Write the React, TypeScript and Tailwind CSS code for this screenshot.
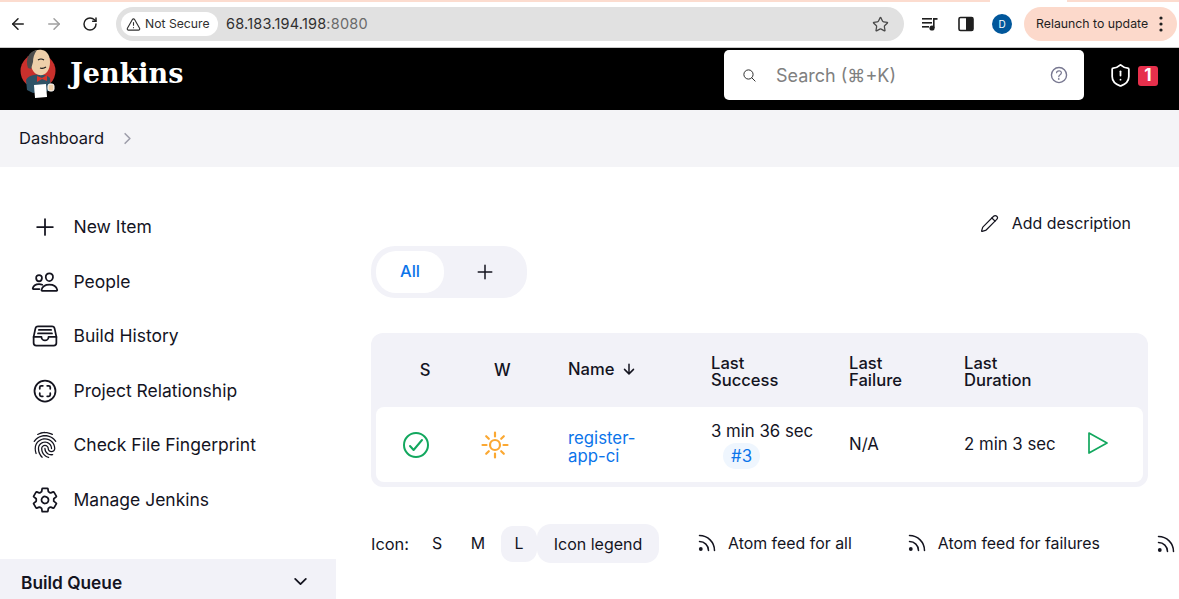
import { ArrowLeft, ArrowRight, RotateCw, TriangleAlert, Star, ShieldAlert, Pencil } from 'lucide-react';
import {
  IoAddOutline,
  IoPeopleOutline,
  IoFileTrayFullOutline,
  IoScanCircleOutline,
  IoFingerPrintOutline,
  IoSettingsOutline,
  IoSearchOutline,
  IoHelpCircleOutline,
  IoArrowDownOutline,
  IoChevronDown,
  IoChevronForward,
  IoCheckmarkCircleOutline,
} from 'react-icons/io5';

const sidebarItems = [
  { label: 'New Item', icon: <IoAddOutline size={28} /> },
  { label: 'People', icon: <IoPeopleOutline size={28} /> },
  { label: 'Build History', icon: <IoFileTrayFullOutline size={28} /> },
  { label: 'Project Relationship', icon: <IoScanCircleOutline size={28} /> },
  { label: 'Check File Fingerprint', icon: <IoFingerPrintOutline size={28} /> },
  { label: 'Manage Jenkins', icon: <IoSettingsOutline size={28} /> },
];

function JenkinsLogo() {
  return (
    <svg width="38" height="50" viewBox="0 0 38 50">
      <circle cx="18" cy="22" r="17.5" fill="#c9302c" />
      <path d="M6 31 C9 24 26 24 30 29 L31 40 L29 42 L13 44 L7 41 Z" fill="#2f5266" />
      <path d="M10 9 C10 3 16 0 22 1 C28 2 30 8 30 13 C30 22 25 27 19 26 C13 25 10 18 10 9 Z" fill="#eecfa9" />
      <path d="M8 19 C5 10 9 2 17 1 C14 5 13 9 13 13 L11 20 Z" fill="#4d4d4d" />
      <path d="M18 11 q3 -2 6 0 M20 19 q3 1 6 -1" stroke="#1a1a1a" strokeWidth="1.2" fill="none" />
      <path d="M17 27 L22 29 L27 26 L27 32 L22 30 L17 33 Z" fill="#d9342b" />
      <path d="M14 36 L26 35 L27 48 L15 49 Z" fill="#ffffff" />
      <rect x="28" y="35" width="6" height="7" rx="2" fill="#eecfa9" stroke="#ffffff" />
    </svg>
  );
}

function RssIcon() {
  return (
    <svg className="shrink-0" width="18" height="18" viewBox="0 0 18 18" fill="none" stroke="#14141f" strokeWidth="1.5" strokeLinecap="round">
      <circle cx="2.8" cy="15" r="1.9" fill="#14141f" stroke="none" />
      <path d="M1.5 7.5 A9 9 0 0 1 10.5 16.5" />
      <path d="M1.5 1.5 A15 15 0 0 1 16.5 16.5" />
    </svg>
  );
}

function SunIcon() {
  return (
    <svg width="28" height="28" viewBox="0 0 28 28" fill="none" stroke="#fba832" strokeWidth="2.2" strokeLinecap="round">
      <circle cx="14" cy="14" r="5" />
      <path d="M14 1.5 V5.5 M14 22.5 V26.5 M1.5 14 H5.5 M22.5 14 H26.5 M5.2 5.2 L7.8 7.8 M20.2 20.2 L22.8 22.8 M5.2 22.8 L7.8 20.2 M20.2 7.8 L22.8 5.2" />
    </svg>
  );
}

function ChromeBar() {
  return (
    <div className="h-[48px] bg-white flex flex-col border-b border-[#c9c9c9]">
      <div className="h-[2px] flex shrink-0">
        <div className="w-[990px] bg-[#fcdccf]" />
        <div className="w-[77px]" />
        <div className="flex-1 bg-[#fcdccf]" />
      </div>
      <div className="flex-1 flex items-center pb-[3px] pt-[2px] pl-[9px] pr-[2px] text-[#1f1f1f]">
        <ArrowLeft size={18} strokeWidth={2} />
        <ArrowRight size={18} strokeWidth={2} className="ml-[18px] text-[#a0a0a0]" />
        <RotateCw size={16} strokeWidth={2.2} className="ml-[19px]" />
        <div className="ml-[18px] w-[788px] h-[34px] rounded-full bg-[#e1e1e1] flex items-center pl-[5px] pr-[15px]">
          <div className="h-[24px] w-[97px] rounded-full bg-white flex items-center pl-[5px] gap-[4px] text-[12.2px] text-[#303030]">
            <TriangleAlert size={15} strokeWidth={1.8} />
            Not Secure
          </div>
          <div className="ml-[8px] text-[14.5px] text-[#303030] tracking-[0.2px]">
            68.183.194.198<span className="text-[#6a6a6a]">:8080</span>
          </div>
          <Star size={17} strokeWidth={1.8} className="ml-auto text-[#4a4a4a]" />
        </div>
        <svg className="ml-[18px]" width="16" height="16" viewBox="0 0 16 16" fill="#1f1f1f">
          <rect x="0" y="2" width="10" height="1.6" />
          <rect x="0" y="6" width="10" height="1.6" />
          <rect x="0" y="10" width="7" height="1.6" />
          <rect x="11" y="2" width="4.5" height="1.8" />
          <rect x="11" y="2" width="1.6" height="10" />
          <circle cx="10" cy="12" r="2.6" />
        </svg>
        <svg className="ml-[20px]" width="16" height="16" viewBox="0 0 16 16">
          <rect x="1" y="1.5" width="14" height="13" rx="1.5" fill="#ffffff" stroke="#1f1f1f" strokeWidth="1.6" />
          <rect x="8" y="1.5" width="7" height="13" fill="#1f1f1f" />
        </svg>
        <div className="ml-[18px] w-[20px] h-[20px] rounded-full bg-[#01579b] text-white text-[10px] flex items-center justify-center">
          D
        </div>
        <div className="ml-[12px] w-[153px] h-[34px] rounded-full bg-[#fcd9cb] flex items-center pl-[12px] text-[12.3px] text-[#1f1f1f]">
          Relaunch to update
          <svg className="ml-[11px]" width="4" height="16" viewBox="0 0 4 16" fill="#1f1f1f">
            <circle cx="2" cy="2" r="1.6" />
            <circle cx="2" cy="8" r="1.6" />
            <circle cx="2" cy="14" r="1.6" />
          </svg>
        </div>
      </div>
    </div>
  );
}

function JenkinsHeader() {
  return (
    <div className="h-[62px] bg-black flex items-center relative pl-[20px]">
      <div className="mb-[10px] flex">
        <JenkinsLogo />
      </div>
      <span className="ml-[12px] mb-[10px] text-white text-[27px] font-bold font-['DejaVu_Serif',serif]">
        Jenkins
      </span>
      <div className="ml-auto mr-[95px] mb-[8px] w-[360px] h-[50px] rounded-[5px] bg-white flex items-center pl-[18px] pr-[15px]">
        <IoSearchOutline size={15} className="text-[#222]" />
        <span className="ml-[19px] text-[18px] text-[#808080]">Search (⌘+K)</span>
        <IoHelpCircleOutline size={22} className="ml-auto mr-[-1px] text-[#777790]" />
      </div>
      <div className="absolute left-[1108px] top-[15px] flex items-center gap-[5px]">
        <ShieldAlert size={25} strokeWidth={1.7} className="text-white" />
        <div className="w-[20px] h-[20px] rounded-[3px] bg-[#e6304c] text-white text-[17px] font-bold flex items-center justify-center">
          1
        </div>
      </div>
    </div>
  );
}

function Sidebar() {
  return (
    <div className="w-[336px] shrink-0 flex flex-col">
      <div className="pt-[33px] flex flex-col">
        {sidebarItems.map((item) => (
          <div key={item.label} className="h-[54.5px] flex items-center pl-[31px] text-[#14141f]">
            <span className="w-[28px] flex justify-center">{item.icon}</span>
            <span className="ml-[14.5px] text-[17.5px]">{item.label}</span>
          </div>
        ))}
      </div>
      <div className="mt-[32px] h-[60px] bg-[#f2f2f8] flex items-start pt-[11px] pl-[21px] pr-[26px]">
        <span className="text-[17.3px] font-semibold text-[#14141f]">Build Queue</span>
        <IoChevronDown size={19} className="ml-auto mt-[2px] text-[#14141f]" />
      </div>
    </div>
  );
}

function JobTable() {
  const cols = 'grid grid-cols-[98px_94px_143px_138px_115px_123px_56px]';
  return (
    <div className="mt-[35px] w-[777px] h-[154px] rounded-[12px] bg-[#f2f2f8] p-[5px] pt-0 flex flex-col">
      <div className={`${cols} h-[74px] items-center text-[16.6px] font-medium text-[#14141f] leading-[17px]`}>
        <div className="text-center">S</div>
        <div className="pl-[20px]">W</div>
        <div className="flex items-center gap-[7px] pb-[2px]">
          Name
          <IoArrowDownOutline size={16} />
        </div>
        <div className="pt-[4px]">
          Last
          <br />
          Success
        </div>
        <div className="pt-[4px]">
          Last
          <br />
          Failure
        </div>
        <div className="pt-[4px]">
          Last
          <br />
          Duration
        </div>
        <div />
      </div>
      <div className={`${cols} h-[75px] rounded-[8px] bg-white items-center text-[16.8px] text-[#14141f]`}>
        <div className="pl-[24px]">
          <IoCheckmarkCircleOutline size={32} className="text-[#12a75e]" />
        </div>
        <div className="pl-[7px]">
          <SunIcon />
        </div>
        <div className="text-[#0b74ea] text-[16.8px] leading-[18px] pt-[4px]">
          register-
          <br />
          app-ci
        </div>
        <div className="leading-[20px]">
          3 min 36 sec
          <div className="mt-[2px] ml-[12px] w-[37px] h-[26px] rounded-full bg-[#eff6fe] text-[#0b74ea] flex items-center justify-center">
            #3
          </div>
        </div>
        <div>N/A</div>
        <div>2 min 3 sec</div>
        <div className="mb-[4px]">
          <svg width="22" height="24" viewBox="0 0 22 24" fill="none" stroke="#12a75e" strokeWidth="1.7" strokeLinejoin="round">
            <path d="M2 2 L20 12 L2 22 Z" />
          </svg>
        </div>
      </div>
    </div>
  );
}

function Footer() {
  return (
    <div className="mt-[37px] h-[39px] flex items-center text-[15.9px] text-[#14141f] whitespace-nowrap">
      <span className="shrink-0 w-[38px] text-[16.4px] pt-[1px]">Icon:</span>
      <span className="shrink-0 w-[36px] ml-[10px] text-center">S</span>
      <span className="shrink-0 w-[36px] ml-[5px] text-center">M</span>
      <span className="shrink-0 w-[36px] h-[36px] ml-[5px] rounded-[12px] bg-[#f2f2f8] flex items-center justify-center">L</span>
      <span className="shrink-0 w-[122px] h-[39px] pt-[1px] rounded-[14px] bg-[#f2f2f8] flex items-center justify-center text-[16px]">
        Icon legend
      </span>
      <span className="shrink-0 ml-[39px] flex items-center gap-[12px]">
        <RssIcon />
        Atom feed for all
      </span>
      <span className="shrink-0 ml-[56px] flex items-center gap-[12px]">
        <RssIcon />
        Atom feed for failures
      </span>
      <span className="shrink-0 ml-[57px] flex items-center">
        <RssIcon />
      </span>
    </div>
  );
}

export default function App() {
  return (
    <div className="w-[1179px] h-[599px] overflow-hidden bg-white font-['Inter','Liberation_Sans',sans-serif]">
      <ChromeBar />
      <JenkinsHeader />
      <div className="h-[57px] bg-[#f4f4f7] flex items-center pl-[19px] text-[16.5px] text-[#14141f]">
        Dashboard
        <IoChevronForward size={17} className="ml-[15px] text-[#9d9daa]" />
      </div>
      <div className="flex">
        <Sidebar />
        <div className="pl-[35px] flex-1 min-w-0">
          <div className="flex justify-end pr-[48px] pt-[45px] h-[79px] items-start">
            <div className="flex items-center gap-[13px] text-[15.9px] text-[#14141f]">
              <Pencil size={19} strokeWidth={1.5} />
              Add description
            </div>
          </div>
          <div className="w-[156px] h-[52px] rounded-[24px] bg-[#f2f2f8] p-[5px] flex items-center">
            <div className="w-[68px] h-[42px] pb-[2px] rounded-[20px] bg-white flex items-center justify-center text-[16.5px] font-medium text-[#0b74ea]">
              All
            </div>
            <IoAddOutline size={24} className="ml-[29px] text-[#14141f]" />
          </div>
          <JobTable />
          <Footer />
        </div>
      </div>
    </div>
  );
}
